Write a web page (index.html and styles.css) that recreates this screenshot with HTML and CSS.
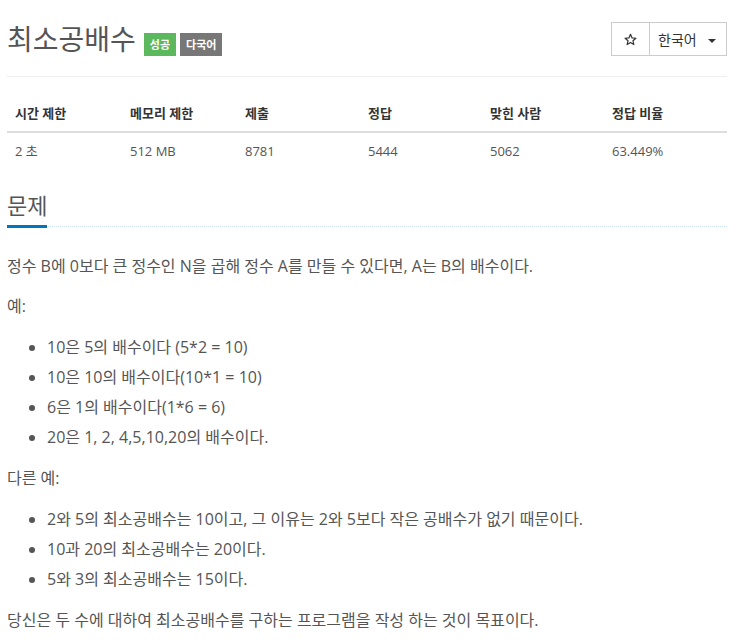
FILE: index.html
```html
<!DOCTYPE html>
<html lang="ko">
<head>
    <meta charset="UTF-8">
    <meta name="viewport" content="width=device-width, initial-scale=1.0">
    <title>최소공배수</title>
    <link rel="stylesheet" href="styles.css">
</head>
<body>
    <div class="page">
        <!-- 문제 제목 -->
        <div class="page-header">
            <h1 class="title">최소공배수
                <span class="label label-success">성공</span>
                <span class="label label-default">다국어</span>
            </h1>
            <div class="btn-group">
                <button type="button" class="btn btn-star">
                    <svg width="13" height="13" viewBox="0 0 24 24"><path d="M12 2.5l2.9 6.6 7.1.6-5.4 4.7 1.6 7-6.2-3.7-6.2 3.7 1.6-7L2 9.7l7.1-.6z" fill="none" stroke="#333" stroke-width="2.2" stroke-linejoin="round"/></svg>
                </button>
                <button type="button" class="btn btn-lang">한국어 <span class="caret"></span></button>
            </div>
        </div>

        <!-- 제한 정보 -->
        <table class="info-table">
            <thead>
                <tr>
                    <th class="c1">시간 제한</th>
                    <th class="c2">메모리 제한</th>
                    <th class="c3">제출</th>
                    <th class="c4">정답</th>
                    <th class="c5">맞힌 사람</th>
                    <th class="c6">정답 비율</th>
                </tr>
            </thead>
            <tbody>
                <tr>
                    <td>2 초</td>
                    <td>512 MB</td>
                    <td>8781</td>
                    <td>5444</td>
                    <td>5062</td>
                    <td>63.449%</td>
                </tr>
            </tbody>
        </table>

        <!-- 문제 본문 -->
        <section class="problem">
            <div class="headline">
                <h2>문제</h2>
            </div>
            <div class="problem-text">
                <p>정수 B에 0보다 큰 정수인 N을 곱해 정수 A를 만들 수 있다면, A는 B의 배수이다.</p>
                <p>예:</p>
                <ul>
                    <li>10은 5의 배수이다 (5*2 = 10)</li>
                    <li>10은 10의 배수이다(10*1 = 10)</li>
                    <li>6은 1의 배수이다(1*6 = 6)</li>
                    <li>20은 1, 2, 4,5,10,20의 배수이다.</li>
                </ul>
                <p>다른 예:</p>
                <ul>
                    <li>2와 5의 최소공배수는 10이고, 그 이유는 2와 5보다 작은 공배수가 없기 때문이다.</li>
                    <li>10과 20의 최소공배수는 20이다.</li>
                    <li>5와 3의 최소공배수는 15이다.</li>
                </ul>
                <p>당신은 두 수에 대하여 최소공배수를 구하는 프로그램을 작성 하는 것이 목표이다.</p>
            </div>
        </section>
    </div>
</body>
</html>
```

FILE: styles.css
```css
body {
    margin: 0;
    font-family: "Open Sans", "Noto Sans CJK KR", sans-serif;
    color: #555;
    background: #fff;
}
.page {
    width: 720px;
    margin-left: 7px;
}

/* 제목 영역 */
.page-header {
    display: flex;
    justify-content: space-between;
    align-items: center;
    padding: 22px 0 20px;
    border-bottom: 1px solid #eee;
}
.title {
    margin: 0;
    font-size: 28px;
    font-weight: normal;
    line-height: 34px;
    color: #555;
    display: flex;
    align-items: center;
}
.label {
    display: inline-block;
    margin-left: 4px;
    padding: 0 6px;
    height: 23px;
    line-height: 23px;
    font-size: 11px;
    font-weight: bold;
    color: #fff;
    position: relative;
    top: 5px;
}
.label-success {
    margin-left: 8px;
    background-color: #5cb85c;
}
.label-default {
    background-color: #777;
}
.btn-group {
    display: flex;
}
.btn {
    height: 34px;
    background: #fff;
    border: 1px solid #ccc;
    font-family: inherit;
    font-size: 14px;
    color: #333;
    padding: 0 12px;
    white-space: nowrap;
}
.btn-star {
    width: 39px;
    padding: 0;
    display: flex;
    align-items: center;
    justify-content: center;
}
.btn-lang {
    width: 77px;
    border-left: none;
    text-align: left;
    padding: 0 0 0 8px;
}
.caret {
    display: inline-block;
    margin-left: 8px;
    vertical-align: middle;
    border-top: 4px solid #333;
    border-left: 4px solid transparent;
    border-right: 4px solid transparent;
}

/* 제한 표 */
.info-table {
    width: 100%;
    margin-top: 18px;
    border-collapse: collapse;
    font-size: 13px;
    table-layout: fixed;
}
.info-table th,
.info-table td {
    text-align: left;
    padding: 8px;
    line-height: 20px;
}
.info-table th {
    color: #333;
    font-weight: bold;
    border-bottom: 2px solid #ddd;
}
.info-table td {
    color: #555;
}
.c1, .c2 { width: 99px; }
.c3 { width: 107px; }
.c4, .c5 { width: 106px; }

/* 문제 */
.problem {
    margin-top: 20px;
}
.headline {
    border-bottom: 1px dotted #cfe3f3;
}
.headline h2 {
    display: inline-block;
    margin: 0 0 -2px;
    padding-bottom: 4px;
    font-size: 22px;
    font-weight: normal;
    line-height: 32px;
    color: #555;
    border-bottom: 3px solid #0076c0;
}
.problem-text {
    margin-top: 25px;
    font-size: 16px;
}
.problem-text p {
    margin: 0 0 12px;
    line-height: 28px;
}
.problem-text ul {
    margin: 0 0 12px;
    padding-left: 40px;
}
.problem-text li {
    line-height: 30px;
}
```
